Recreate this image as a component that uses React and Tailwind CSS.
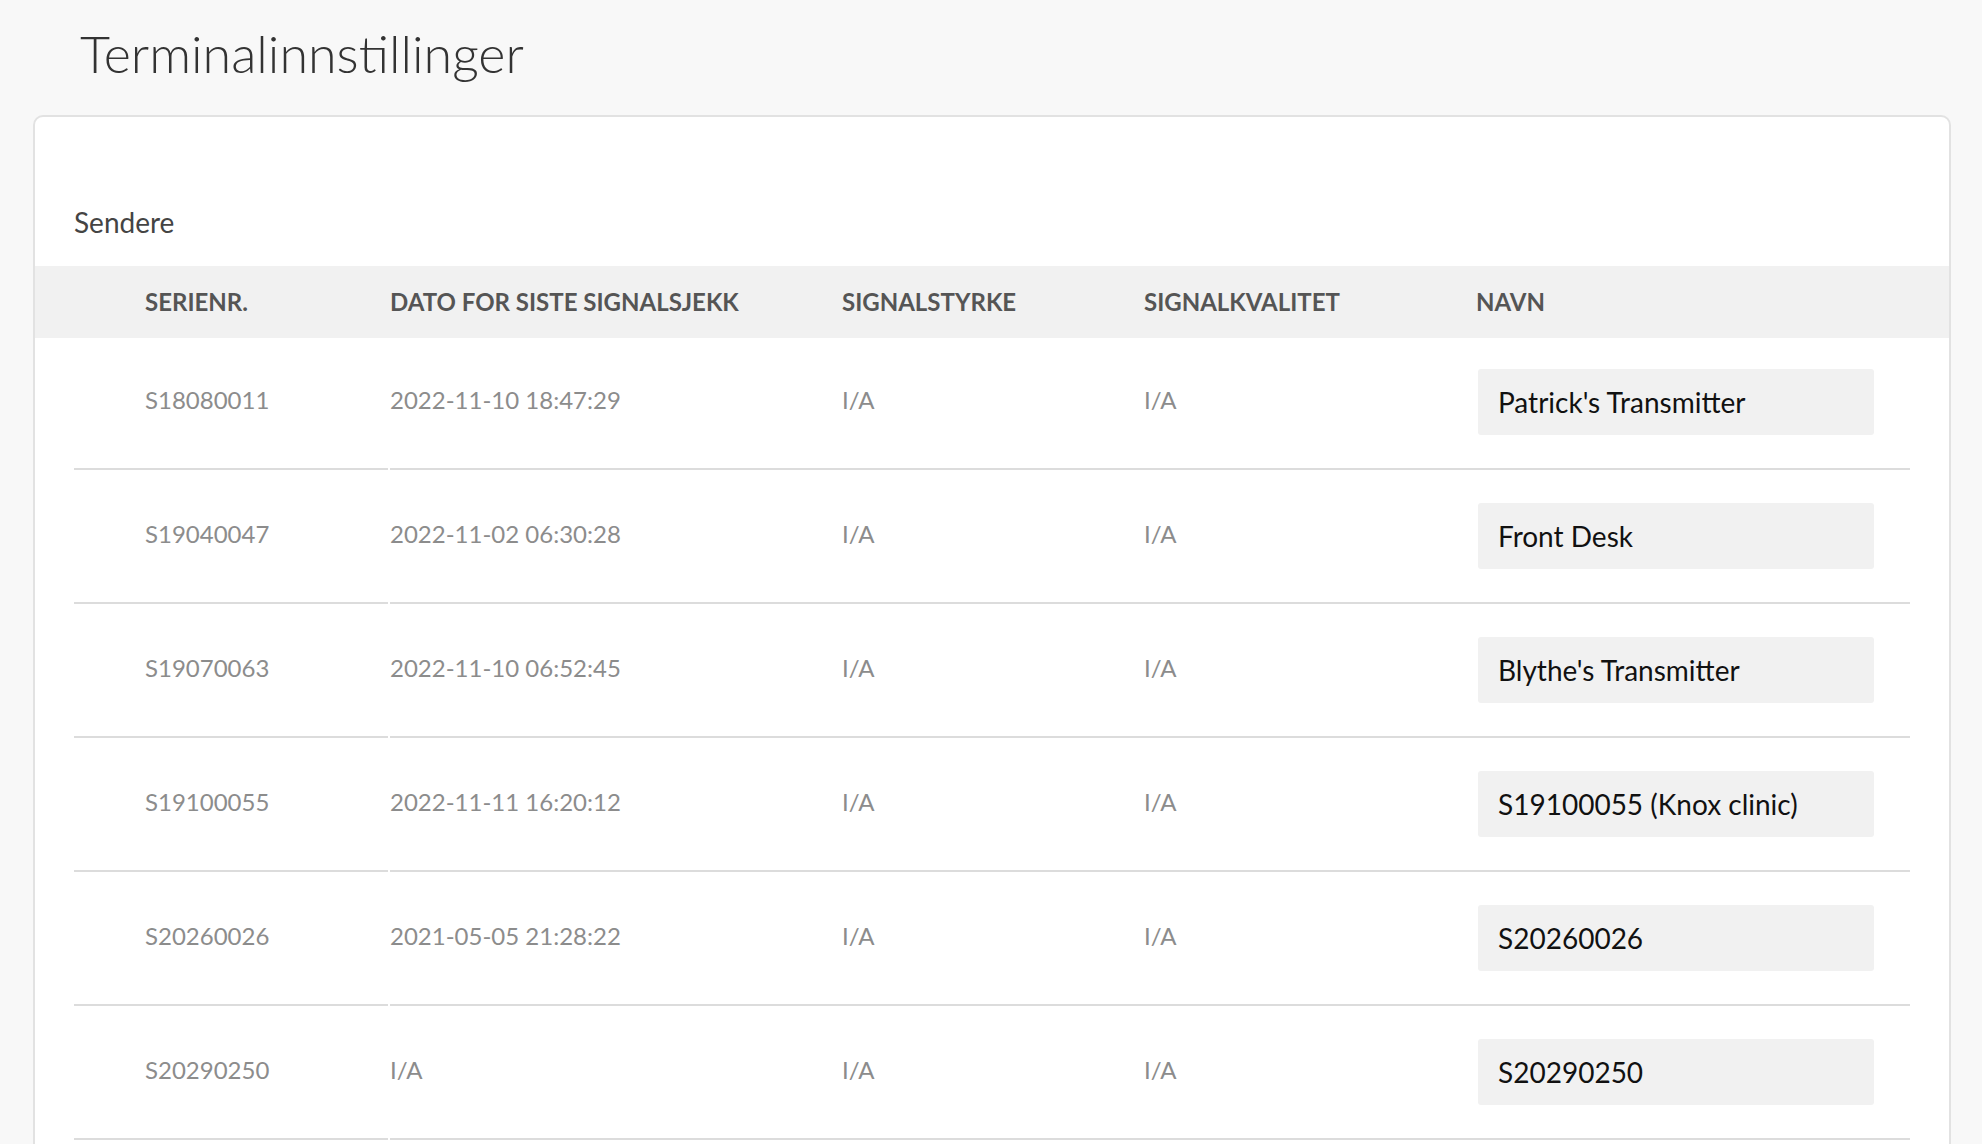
const rows = [
  { serial: 'S18080011', date: '2022-11-10 18:47:29', name: "Patrick's Transmitter" },
  { serial: 'S19040047', date: '2022-11-02 06:30:28', name: 'Front Desk' },
  { serial: 'S19070063', date: '2022-11-10 06:52:45', name: "Blythe's Transmitter" },
  { serial: 'S19100055', date: '2022-11-11 16:20:12', name: 'S19100055 (Knox clinic)' },
  { serial: 'S20260026', date: '2021-05-05 21:28:22', name: 'S20260026' },
  { serial: 'S20290250', date: 'I/A', name: 'S20290250' },
];

export default function App() {
  return (
    <div className="min-h-screen bg-[#f8f8f8] font-['Lato',sans-serif]">
      {/* Tittel */}
      <h1 className="pt-[27px] pl-[80px] text-[52px] leading-none font-light text-[#333]">
        Terminalinnstillinger
      </h1>

      {/* Kort */}
      <div className="mt-[36px] ml-[33px] mr-[31px] bg-white border-2 border-[#e2e2e2] rounded-[10px] pb-[40px]">
        <p className="pt-[91px] pl-[39px] text-[28px] leading-none text-[#444]">Sendere</p>

        {/* Tabellhode */}
        <div className="mt-[30px] bg-[#f1f1f1] h-[72px] px-[39px] flex items-center text-[24px] leading-none font-bold text-[#555] uppercase">
          <div className="w-[314px] pl-[71px]">Serienr.</div>
          <div className="w-[454px] pl-[2px]">Dato for siste signalsjekk</div>
          <div className="w-[302px]">Signalstyrke</div>
          <div className="w-[332px]">Signalkvalitet</div>
          <div className="flex-1">Navn</div>
        </div>

        {/* Rader */}
        <div className="px-[39px] flex flex-col gap-[2px]">
          {rows.map((r) => (
            <div key={r.serial} className="flex h-[132px] text-[24px] leading-none text-[#8c8c8c]">
              <div className="w-[314px] pl-[71px] pb-[6px] flex items-center border-b-2 border-[#dcdcdc]">{r.serial}</div>
              <div className="w-[452px] ml-[2px] pb-[6px] flex items-center border-b-2 border-[#dcdcdc]">{r.date}</div>
              <div className="w-[302px] pb-[6px] flex items-center border-b-2 border-[#dcdcdc]">I/A</div>
              <div className="w-[332px] pb-[6px] flex items-center border-b-2 border-[#dcdcdc]">I/A</div>
              <div className="flex-1 pb-[2px] flex items-center border-b-2 border-[#dcdcdc]">
                <input
                  type="text"
                  defaultValue={r.name}
                  className="ml-[2px] w-[396px] h-[66px] bg-[#f1f1f1] rounded-[3px] pl-[20px] text-[28px] text-[#111] outline-none"
                />
              </div>
            </div>
          ))}
        </div>
      </div>
    </div>
  );
}
